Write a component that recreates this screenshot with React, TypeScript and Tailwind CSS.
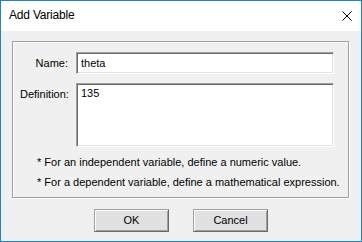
export default function App() {
  const font = "font-['Liberation_Sans',Arial,sans-serif]";
  const field =
    "block w-[258px] border border-t-[#a0a0a0] border-l-[#a0a0a0] border-b-white border-r-white bg-white pl-[4px] text-[11px] text-black outline-none shadow-[inset_1px_1px_0_#696969,inset_-1px_-1px_0_#e3e3e3]";
  const button =
    "w-[75px] h-[23px] border border-t-[#a0a0a0] border-l-[#a0a0a0] border-b-[#696969] border-r-[#696969] bg-[#e1e1e1] text-[11px] text-black shadow-[inset_1px_1px_0_#fff,inset_-1px_-1px_0_#a0a0a0]";

  return (
    <div
      className={`w-[362px] h-[242px] flex flex-col border border-[#1883d7] bg-[#f0f0f0] ${font}`}
    >
      <div className="h-[30px] flex items-center justify-between bg-white pl-[8px] pr-[9px]">
        <span className="text-[12px] text-black tracking-[-0.2px] pb-[2px]">
          Add Variable
        </span>
        <svg width="10" height="10" viewBox="0 0 10 10" className="mb-[1px]">
          <path d="M0.5 0.5L9.5 9.5M9.5 0.5L0.5 9.5" stroke="#000" strokeWidth="1" />
        </svg>
      </div>

      <div className="flex-1 pl-[11px] pt-[10px]">
        <div className="w-[337px] h-[157px] border border-[#a0a0a0] shadow-[1px_1px_0_#fff,inset_1px_1px_0_#fff] pt-[10px] pl-[7px]">
          <div className="flex items-center gap-[8px]">
            <span className="w-[48px] text-right text-[11px] text-black">Name:</span>
            <input readOnly value="theta" className={`${field} h-[22px]`} />
          </div>
          <div className="flex items-start gap-[8px] mt-[9px]">
            <span className="w-[48px] text-right text-[11px] text-black pt-[3px]">
              Definition:
            </span>
            <textarea
              readOnly
              value="135"
              className={`${field} h-[64px] resize-none pt-[2px] leading-[14px]`}
            />
          </div>
          <div className="mt-[5px] pl-[17px] text-[11px] leading-[20px] text-black">
            <p>* For an independent variable, define a numeric value.</p>
            <p>* For a dependent variable, define a mathematical expression.</p>
          </div>
        </div>

        <div className="flex justify-center gap-[24px] mt-[11px] pr-[11px]">
          <button className={button}>OK</button>
          <button className={button}>Cancel</button>
        </div>
      </div>
    </div>
  );
}
